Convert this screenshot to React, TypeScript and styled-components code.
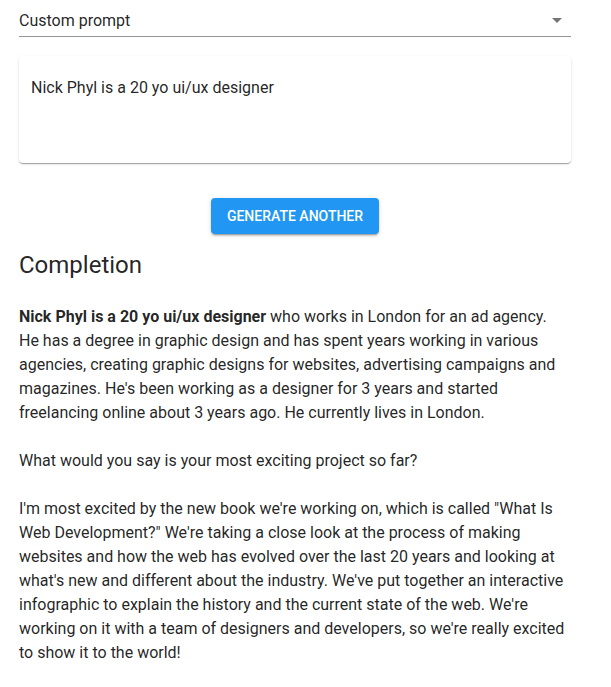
import React from 'react';
import styled, { createGlobalStyle } from 'styled-components';

const GlobalStyle = createGlobalStyle`
  body {
    margin: 0;
    background: #fff;
    font-family: Roboto, "Liberation Sans", Arial, sans-serif;
    color: rgba(0, 0, 0, 0.87);
  }
`;

const Page = styled.div`
  width: 552px;
  margin: 0 auto 0 19px;
  padding-top: 4px;
`;

const SelectBox = styled.div`
  display: flex;
  align-items: center;
  justify-content: space-between;
  height: 32px;
  border-bottom: 1px solid rgba(0, 0, 0, 0.42);
  font-size: 16px;
`;

const SelectValue = styled.span`
  line-height: 23px;
  padding-top: 1px;
`;

const Arrow = styled.svg`
  width: 24px;
  height: 24px;
  margin-right: 2px;
  fill: rgba(0, 0, 0, 0.54);
`;

const Card = styled.div`
  margin-top: 19px;
  min-height: 107px;
  box-sizing: border-box;
  padding: 20px 12px;
  background: #fff;
  border-radius: 4px;
  box-shadow: 0px 2px 1px -1px rgba(0, 0, 0, 0.2), 0px 1px 1px 0px rgba(0, 0, 0, 0.14),
    0px 1px 3px 0px rgba(0, 0, 0, 0.12);
  font-size: 16px;
  line-height: 24px;
`;

const Actions = styled.div`
  display: flex;
  justify-content: center;
  margin-top: 35px;
`;

const Button = styled.button`
  height: 36px;
  padding: 6px 16px;
  border: none;
  border-radius: 4px;
  background: #2196f3;
  color: #fff;
  font-family: Roboto, "Liberation Sans", Arial, sans-serif;
  font-size: 14px;
  font-weight: 500;
  text-transform: uppercase;
  box-shadow: 0px 3px 1px -2px rgba(0, 0, 0, 0.2), 0px 2px 2px 0px rgba(0, 0, 0, 0.14),
    0px 1px 5px 0px rgba(0, 0, 0, 0.12);
  cursor: pointer;
`;

const Heading = styled.h2`
  margin: 15px 0 0;
  font-size: 24px;
  font-weight: 400;
  line-height: 32px;
`;

const Completion = styled.div`
  margin-top: 24px;
  max-width: 549px;
  font-size: 16px;
  line-height: 24px;
  white-space: pre-wrap;
`;

const prompt = 'Nick Phyl is a 20 yo ui/ux designer';
const rest = ` who works in London for an ad agency. He has a degree in graphic design and has spent years working in various agencies, creating graphic designs for websites, advertising campaigns and magazines. He's been working as a designer for 3 years and started freelancing online about 3 years ago. He currently lives in London.

What would you say is your most exciting project so far?

I'm most excited by the new book we're working on, which is called "What Is Web Development?" We're taking a close look at the process of making websites and how the web has evolved over the last 20 years and looking at what's new and different about the industry. We've put together an interactive infographic to explain the history and the current state of the web. We're working on it with a team of designers and developers, so we're really excited to show it to the world!`;

export default function App() {
  return (
    <>
      <GlobalStyle />
      <Page>
        <SelectBox>
          <SelectValue>Custom prompt</SelectValue>
          <Arrow viewBox="0 0 24 24">
            <path d="M7 10l5 5 5-5z" />
          </Arrow>
        </SelectBox>
        <Card>{prompt}</Card>
        <Actions>
          <Button>Generate another</Button>
        </Actions>
        <Heading>Completion</Heading>
        <Completion>
          <b>{prompt}</b>
          {rest}
        </Completion>
      </Page>
    </>
  );
}
